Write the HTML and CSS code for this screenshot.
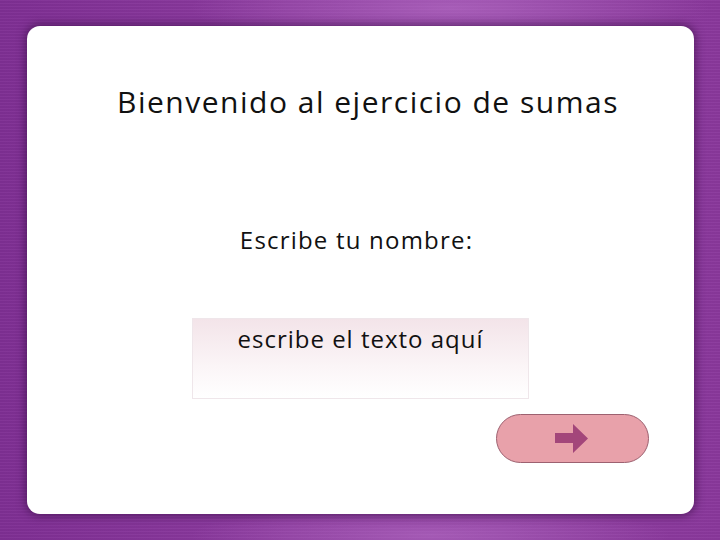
FILE: index.html
```html
<!DOCTYPE html>
<html lang="es">
<head>
<meta charset="utf-8">
<title>Ejercicio de sumas</title>
<link rel="stylesheet" href="styles.css">
</head>
<body>
<div class="stage">
  <main class="card">
    <h1 class="title">Bienvenido al ejercicio de sumas</h1>
    <p class="label">Escribe tu nombre:</p>
    <div class="field">escribe el texto aquí</div>
    <div class="actions">
      <button class="next" type="button" aria-label="Siguiente">
        <svg width="34" height="29" viewBox="0 0 34 29"><path d="M0 9 H18 V0 L33 14.5 L18 29 V19 H0 Z" fill="#a3467a"/></svg>
      </button>
    </div>
  </main>
</div>
</body>
</html>
```
FILE: styles.css
```css
html, body {
  margin: 0;
  padding: 0;
}
body {
  width: 720px;
  height: 540px;
  overflow: hidden;
  font-family: "Open Sans", Lato, sans-serif;
  background:
    radial-gradient(ellipse 260px 40px at 450px 8px, rgba(190,120,205,0.55), rgba(190,120,205,0) 100%),
    radial-gradient(ellipse 240px 30px at 430px 535px, rgba(190,120,205,0.5), rgba(190,120,205,0) 100%),
    repeating-linear-gradient(180deg, rgba(255,255,255,0.03) 0 1px, rgba(0,0,0,0.03) 1px 3px),
    linear-gradient(90deg, #7f2f94 0%, #8c3b9f 40%, #8e3ea1 70%, #8a389c 100%);
}
.stage {
  box-sizing: border-box;
  width: 720px;
  height: 540px;
  padding: 26px 26px 26px 27px;
}
.card {
  box-sizing: border-box;
  height: 488px;
  background: #fff;
  border-radius: 13px;
  box-shadow: 0 0 9px 2px rgba(50, 10, 60, 0.55);
  display: flex;
  flex-direction: column;
  align-items: center;
  padding-top: 56px;
}
.title {
  margin: 0 0 0 15px;
  font-weight: 400;
  font-size: 30px;
  letter-spacing: 1.5px;
  line-height: 40px;
  color: #111;
}
.label {
  margin: 101px 0 0 -8px;
  font-size: 24px;
  letter-spacing: 1.2px;
  line-height: 34px;
  color: #111;
}
.field {
  box-sizing: border-box;
  margin-top: 61px;
  width: 337px;
  height: 81px;
  border: 1px solid #efe6ea;
  background: linear-gradient(180deg, #f3e4e9 0%, #fbf5f7 60%, #ffffff 100%);
  text-align: center;
  font-size: 24px;
  letter-spacing: 1px;
  line-height: 40px;
  color: #111;
}
.actions {
  align-self: stretch;
  display: flex;
  justify-content: flex-end;
  padding-right: 45px;
  margin-top: 15px;
}
.next {
  width: 153px;
  height: 49px;
  border-radius: 25px;
  border: 1px solid #9d6170;
  background: #e8a1aa;
  display: flex;
  align-items: center;
  justify-content: center;
  padding: 0 2px 0 0;
  margin: 0;
}
.next svg {
  display: block;
}
```
